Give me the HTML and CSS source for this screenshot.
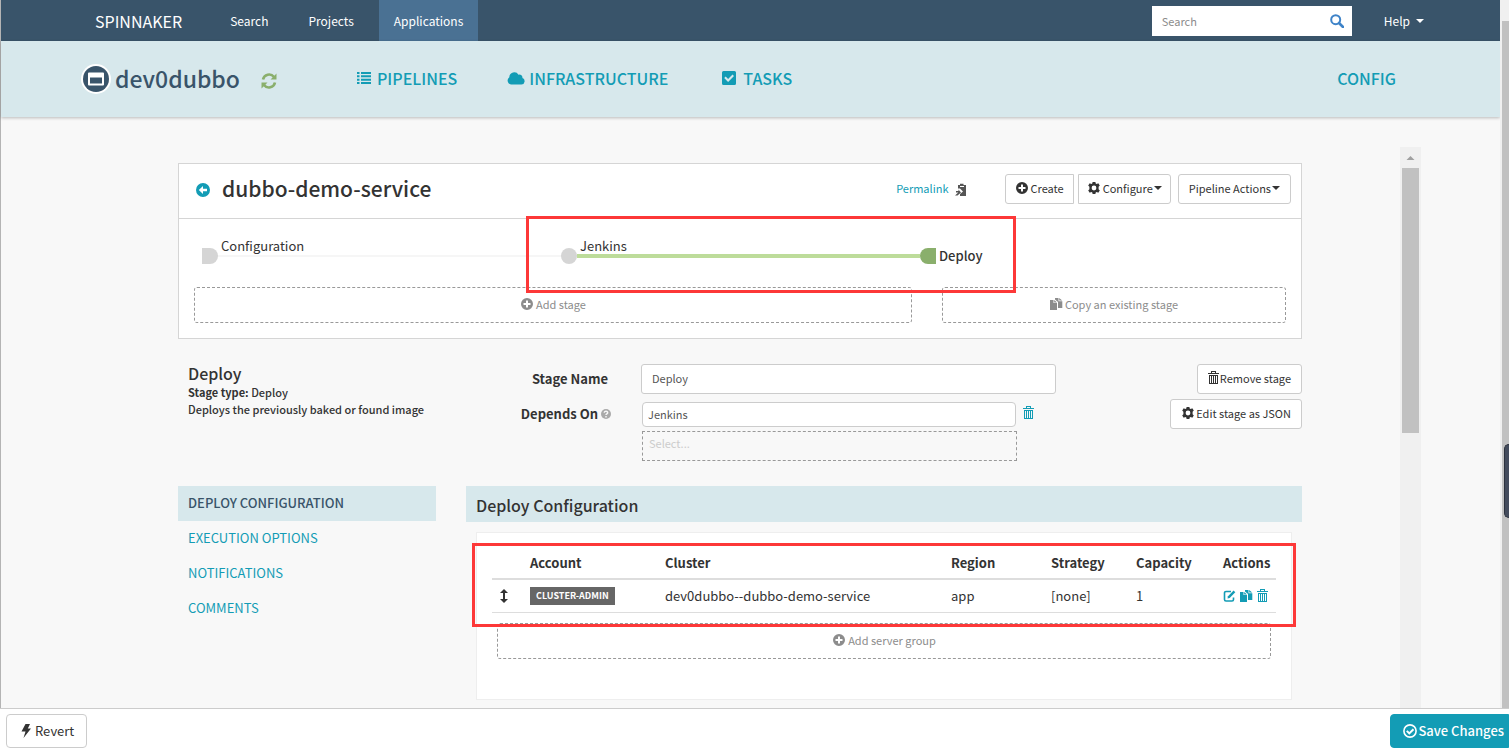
FILE: index.html
```html
<!DOCTYPE html>
<html lang="en">
<head>
<meta charset="utf-8">
<title>dev0dubbo · Pipelines</title>
<link rel="stylesheet" href="styles.css">
</head>
<body>
<svg class="sprite" aria-hidden="true">
  <symbol id="plus" viewBox="0 0 14 14"><path fill-rule="evenodd" d="M7 1a6 6 0 1 0 0 12A6 6 0 0 0 7 1zM6 3.500h2V6h2.500v2H8v2.500H6V8H3.500V6H6z"/></symbol>
  <symbol id="back" viewBox="0 0 14 14"><path fill-rule="evenodd" d="M7 0a7 7 0 1 0 0 14A7 7 0 0 0 7 0zM7 3v2.800h4v2.400H7V11L2.800 7z"/></symbol>
  <symbol id="gear" viewBox="0 0 14 14"><path fill-rule="evenodd" d="M5.600 1h2.800l.3 1.600 1 .5L11.300 2.200l1.500 2.300-1.200 1.300v2.400l1.200 1.300-1.500 2.300-1.600-.9-1 .5-.3 1.600H5.600l-.3-1.600-1-.5-1.600.9-1.500-2.300 1.200-1.300V5.800L1.200 4.500l1.500-2.300 1.600.9 1-.5zM7 4.600a2.400 2.400 0 1 0 0 4.800 2.400 2.400 0 0 0 0-4.800z"/></symbol>
  <symbol id="trash" viewBox="0 0 11 14"><path shape-rendering="crispEdges" fill-rule="evenodd" d="M3 0h5v2h3v1H0V2h3zM4 1v1h3V1zM1 4h9v9H1zM2 5v7h1V5zM4 5v7h1V5zM6 5v7h1V5zM8 5v7h1V5z"/></symbol>
  <symbol id="copy" viewBox="0 0 13 12"><path d="M0 2h3.500v3H7v7H0zM4.200 2L7 4.500H4.200zM5 0h3.500v3.200h3.800V10H8V4L5 1.400zM9.200 0l3 2.600h-3z"/></symbol>
  <symbol id="clip" viewBox="0 0 12 13"><path d="M3 2h2V.8h3.500V2H11v11H5v-2l3-2.500L5 5.500H3zM5 3v1h4V3z" fill-rule="evenodd"/><path d="M0 12.500h2.500L6 9.500 3.500 6.500V8H1v1.500h2.300z"/></symbol>
  <symbol id="edit" viewBox="0 0 13 12"><path d="M8 1.500H3A1.500 1.500 0 0 0 1.500 3v6.500A1.500 1.500 0 0 0 3 11h6a1.500 1.500 0 0 0 1.500-1.500V7.500" fill="none" stroke="currentColor" stroke-width="1.600"/><path d="M5 6.300L10.600.6l1.700 1.700L6.700 8 4.500 8.500z"/></symbol>
  <symbol id="updown" viewBox="0 0 8 14"><path d="M4 0l4 4H5v6h3l-4 4-4-4h3V4H0z"/></symbol>
  <symbol id="list" viewBox="0 0 14 12"><path d="M0 0h2.500v2H0zM4 0h10v2H4zM0 3.300h2.500v2H0zM4 3.300h10v2H4zM0 6.700h2.500v2H0zM4 6.700h10v2H4zM0 10h2.500v2H0zM4 10h10v2H4z"/></symbol>
  <symbol id="cloud" viewBox="0 0 18 13"><path d="M4 12.500A4 4 0 0 1 2.300 5.300 5 5 0 0 1 11.500 2.700a3 3 0 0 1 3.900 3.400 3.300 3.300 0 0 1-.9 6.400z"/></symbol>
  <symbol id="task" viewBox="0 0 14 14"><path fill-rule="evenodd" d="M1.500 0h11A1.500 1.500 0 0 1 14 1.500v11a1.500 1.500 0 0 1-1.500 1.500h-11A1.500 1.500 0 0 1 0 12.500v-11A1.500 1.500 0 0 1 1.500 0zM2.200 7l3.900 3.900L12 5l-1.500-1.500-4.400 4.400-2.400-2.400z"/></symbol>
  <symbol id="refresh" viewBox="0 0 16 16"><path d="M2 6.500A6.200 6.200 0 0 1 13 4M14 9.500A6.200 6.200 0 0 1 3 12" fill="none" stroke="currentColor" stroke-width="2.600"/><path d="M15.500.5v6h-6zM.5 15.500v-6h6z"/></symbol>
  <symbol id="find" viewBox="0 0 14 14"><circle cx="5.700" cy="5.700" r="4.500" fill="none" stroke="currentColor" stroke-width="2"/><path d="M9 9l4 4" stroke="currentColor" stroke-width="2.600" stroke-linecap="round"/></symbol>
  <symbol id="caret" viewBox="0 0 8 4"><path d="M0 0h8L4 4z"/></symbol>
  <symbol id="help" viewBox="0 0 10 10"><circle cx="5" cy="5" r="5"/><path d="M3.300 3.800C3.300 1.600 6.700 1.700 6.700 3.700 6.700 5 5 4.800 5 6.100M5 7v1.400" fill="none" stroke="#f8f8f8" stroke-width="1.400"/></symbol>
  <symbol id="bolt" viewBox="0 0 10 14"><path d="M4.500 0H9L6.800 4.500H10L2.500 14l2-6.500H.5z"/></symbol>
  <symbol id="check" viewBox="0 0 14 14"><circle cx="7" cy="7" r="6.100" fill="none" stroke="currentColor" stroke-width="1.600"/><path d="M3.800 6.900l2.500 2.500 4.200-4.200" fill="none" stroke="currentColor" stroke-width="2"/></symbol>
  <symbol id="app" viewBox="0 0 30 30"><circle cx="15" cy="15" r="15" fill="#fff"/><circle cx="15" cy="15" r="13" fill="#39546a"/><path d="M8 8.500h14a1 1 0 0 1 1 1v11a1 1 0 0 1-1 1H8a1 1 0 0 1-1-1v-11a1 1 0 0 1 1-1zM9 13.500v6h12v-6z" fill="#fff" fill-rule="evenodd"/></symbol>
</svg>

<div class="window">
  <div class="page">
    <nav class="topbar">
      <a class="brand" href="#">SPINNAKER</a>
      <div class="topnav">
        <a href="#">Search</a>
        <a href="#">Projects</a>
        <a class="active" href="#">Applications</a>
      </div>
      <label class="search">
        <input type="text" placeholder="Search" aria-label="Search">
        <svg class="i14"><use href="#find"/></svg>
      </label>
      <a class="helplink" href="#">Help <svg class="caret"><use href="#caret"/></svg></a>
    </nav>
    <header class="appbar">
      <svg class="appicon"><use href="#app"/></svg>
      <h1>dev0dubbo</h1>
      <button class="bare refresh" aria-label="Refresh"><svg class="i16"><use href="#refresh"/></svg></button>
      <div class="tabs">
        <a href="#"><svg class="listicon"><use href="#list"/></svg>PIPELINES</a>
        <a class="tight" href="#"><svg class="cloud"><use href="#cloud"/></svg>INFRASTRUCTURE</a>
        <a class="wide" href="#"><svg class="i14"><use href="#task"/></svg>TASKS</a>
      </div>
      <a class="config" href="#">CONFIG</a>
    </header>

    <div class="body">
      <main class="content">
        <section class="panel">
          <div class="panel-head">
            <a class="back" href="#" aria-label="Back"><svg class="i14"><use href="#back"/></svg></a>
            <h2>dubbo-demo-service</h2>
            <a class="permalink" href="#">Permalink</a>
            <button class="bare clip" aria-label="Copy link"><svg class="i12"><use href="#clip"/></svg></button>
            <div class="actions">
              <button class="btn first"><svg class="i14"><use href="#plus"/></svg>Create</button>
              <button class="btn mid"><svg class="i14"><use href="#gear"/></svg>Configure<svg class="caret"><use href="#caret"/></svg></button>
              <button class="btn last">Pipeline Actions<svg class="caret"><use href="#caret"/></svg></button>
            </div>
          </div>
          <div class="graph">
            <div class="stage start"><span class="node"></span><span class="name">Configuration</span></div>
            <div class="stage middle"><span class="node"></span><span class="name">Jenkins</span></div>
            <div class="stage end"><span class="node"></span><span class="name">Deploy</span></div>
          </div>
          <div class="adders">
            <button class="dashed"><svg class="i14"><use href="#plus"/></svg>Add stage</button>
            <button class="dashed"><svg class="copy"><use href="#copy"/></svg>Copy an existing stage</button>
          </div>
          <div class="mark mark-graph"></div>
        </section>

        <section class="details">
          <div class="intro">
            <h3>Deploy</h3>
            <p><b>Stage type:</b> Deploy</p>
            <p>Deploys the previously baked or found image</p>
          </div>
          <div class="labels">
            <label for="stage-name">Stage Name</label>
            <label class="with-help" for="depends">Depends On<svg class="help"><use href="#help"/></svg></label>
          </div>
          <div class="fields">
            <input id="stage-name" type="text" value="Deploy">
            <div class="depends">
              <input id="depends" type="text" value="Jenkins">
              <button class="bare" aria-label="Remove dependency"><svg class="trash"><use href="#trash"/></svg></button>
            </div>
            <select aria-label="Add dependency"><option>Select...</option></select>
          </div>
          <div class="buttons">
            <button class="btn"><svg class="trash"><use href="#trash"/></svg>Remove stage</button>
            <button class="btn"><svg class="i14"><use href="#gear"/></svg>Edit stage as JSON</button>
          </div>
        </section>

        <div class="config-area">
          <nav class="sections">
            <a class="active" href="#">DEPLOY CONFIGURATION</a>
            <a href="#">EXECUTION OPTIONS</a>
            <a href="#">NOTIFICATIONS</a>
            <a href="#">COMMENTS</a>
          </nav>
          <section class="deploy">
            <h4>Deploy Configuration</h4>
            <div class="card">
              <table>
                <colgroup><col class="c-move"><col class="c-account"><col><col class="c-region"><col class="c-strategy"><col class="c-capacity"><col class="c-actions"></colgroup>
                <thead><tr><th></th><th>Account</th><th>Cluster</th><th>Region</th><th>Strategy</th><th>Capacity</th><th>Actions</th></tr></thead>
                <tbody><tr>
                  <td><svg class="updown"><use href="#updown"/></svg></td>
                  <td><span class="tag">CLUSTER-ADMIN</span></td>
                  <td>dev0dubbo--dubbo-demo-service</td>
                  <td>app</td>
                  <td>[none]</td>
                  <td>1</td>
                  <td><div class="rowacts">
                    <button class="bare" aria-label="Edit"><svg class="copy"><use href="#edit"/></svg></button>
                    <button class="bare" aria-label="Copy"><svg class="copy"><use href="#copy"/></svg></button>
                    <button class="bare" aria-label="Delete"><svg class="trash"><use href="#trash"/></svg></button>
                  </div></td>
                </tr></tbody>
              </table>
              <button class="dashed"><svg class="i14"><use href="#plus"/></svg>Add server group</button>
              <div class="mark mark-table"></div>
            </div>
          </section>
        </div>
      </main>
      <div class="scroll inner"><svg class="arrow"><use href="#caret"/></svg><div class="thumb"></div></div>
    </div>
  </div>
  <div class="scroll outer"><div class="thumb"></div></div>
  <div class="handle"></div>
</div>
<footer class="footer">
  <button class="revert"><svg class="bolt"><use href="#bolt"/></svg>Revert</button>
  <button class="save"><svg class="i14"><use href="#check"/></svg>Save Changes</button>
</footer>
</body>
</html>
```
FILE: styles.css
```css
* { box-sizing: border-box; }
body {
  margin: 0;
  height: 100vh;
  display: flex;
  flex-direction: column;
  overflow: hidden;
  font: 13px/18px "Noto Sans CJK SC", "Open Sans", sans-serif;
  color: #333;
  background: #f8f8f8;
}
a { color: #139cb5; text-decoration: none; }
h1, h2, h3, h4, p { margin: 0; font-weight: 500; }
button, input, select { font: inherit; color: inherit; }
svg { fill: currentColor; flex: none; display: block; }
.sprite { position: absolute; width: 0; height: 0; }
.i12 { width: 12px; height: 13px; }
.i14 { width: 14px; height: 14px; }
.i16 { width: 16px; height: 16px; }
.caret { width: 8px; height: 4px; }
.copy { width: 13px; height: 12px; }
.trash { width: 11px; height: 14px; }
.updown { width: 8px; height: 14px; }
.bare { border: 0; padding: 0; background: none; color: #139cb5; }

.window { flex: 1; min-height: 0; display: flex; position: relative; border-left: 1px solid #b4b4b4; }
.page { flex: 1; min-width: 0; display: flex; flex-direction: column; }

.topbar { height: 41px; flex: none; display: flex; align-items: center; padding: 0 76px 0 94px; background: #39546a; font-size: 12px; }
.topbar a { color: #fff; }
.brand { font-size: 16px; }
.topnav { display: flex; gap: 10px; margin-left: 33px; }
.topnav a { padding: 1px 15px 0; line-height: 40px; }
.topnav .active { background: #4a7193; }
.search { display: flex; align-items: center; width: 200px; height: 30px; margin-left: auto; padding: 0 8px 0 10px; background: #fff; color: #3e83c8; }
.search input { flex: 1; min-width: 0; border: 0; padding: 0; outline: 0; font-size: 11px; background: none; }
.search input::placeholder { color: #8c8c8c; opacity: 1; }
.helplink { display: flex; align-items: center; gap: 6px; margin-left: 32px; }

.appbar { height: 76px; flex: none; display: flex; align-items: center; padding: 0 104px 0 80px; background: #d7e8ec; box-shadow: 0 1px 3px rgba(0, 0, 0, .25); }
.appicon { width: 30px; height: 30px; }
h1 { margin-left: 4px; padding-bottom: 2px; font-size: 23px; line-height: 30px; color: #39546a; }
.refresh { margin: 4px 0 0 21px; color: #8aaf6c; }
.tabs { display: flex; gap: 50px; margin-left: 80px; }
.tabs a, .config { display: flex; align-items: center; gap: 6px; padding-bottom: 2px; font-size: 16px; line-height: 24px; font-weight: 500; }
.tabs .tight { gap: 4px; }
.tabs .wide { gap: 7px; margin-left: 4px; }
.config { margin-left: auto; }
.listicon { width: 14px; height: 12px; }
.cloud { width: 18px; height: 13px; }

.body { flex: 1; min-height: 0; display: flex; margin: 30px 79px 0; }
.content { flex: 1; min-width: 0; padding: 16px 98px 0; overflow: hidden; }

.scroll { background: #f0f0f0; flex: none; }
.scroll .thumb { background: #c1c1c1; }
.inner { width: 21px; padding: 9px 2px 0; display: flex; flex-direction: column; align-items: center; gap: 8px; }
.inner .thumb { width: 17px; height: 48%; }
.arrow { width: 9px; height: 4px; color: #a0a0a0; transform: rotate(180deg); }
.outer { width: 9px; padding: 21px 0 0 2px; }
.outer .thumb { height: 100%; }
.handle { position: absolute; right: 0; top: 444px; width: 5px; height: 74px; border-radius: 5px 0 0 5px; background: #434b5c; border: 1px solid #2c323e; border-right: 0; }

.panel { position: relative; border: 1px solid #d5d5d5; background: #fff; }
.panel-head { display: flex; align-items: center; height: 55px; padding: 0 10px 4px 17px; border-bottom: 1px solid #d5d5d5; font-size: 11px; }
h2 { margin: 0 auto 0 12px; padding-bottom: 2px; font-size: 21px; line-height: 30px; }
.back { padding-top: 2px; }
.permalink { padding-bottom: 2px; }
.clip { margin-left: 7px; color: #555; }
.actions { display: flex; margin-left: 38px; }
.btn { display: flex; align-items: center; gap: 2px; height: 30px; padding: 0 10px 2px; border: 1px solid #ccc; border-radius: 3px; background: #fff; font-size: 11px; white-space: nowrap; }
.btn .caret { margin-left: -1px; }
.btn.first { border-radius: 3px 0 0 3px; margin-right: 4px; padding: 0 9px 2px; gap: 1px; }
.btn.mid { border-radius: 0 3px 3px 0; margin-right: 7px; padding: 0 8px 2px; }

.graph { display: grid; grid-template-columns: repeat(3, 1fr); padding: 29px 22px 23px 23px; }
.stage { position: relative; display: flex; align-items: center; height: 16px; }
.stage::after { content: ""; flex: 1; height: 2px; background: #f6f6f6; }
.middle::after { height: 4px; background: #bddc9a; }
.end::after { content: none; }
.node { width: 16px; height: 16px; border-radius: 8px; background: #d5d5d5; }
.start .node { border-radius: 0 8px 8px 0; }
.end .node { border-radius: 8px 0 0 8px; background: #8aaf6c; }
.name { position: absolute; left: 19px; bottom: 9px; }
.end .name { position: static; margin-left: 3px; font-weight: 500; }

.dashed { display: flex; align-items: center; justify-content: center; gap: 2px; height: 36px; padding: 0 6px 2px; border: 1px dashed #999; border-radius: 3px; background: none; color: #8c8c8c; font-size: 11px; }
.adders { display: grid; grid-template-columns: 718fr 344fr; gap: 30px; padding: 0 15px 15px; }
.mark { position: absolute; border: 3px solid #fd3838; pointer-events: none; }
.mark-graph { right: 285px; width: 490px; top: 52px; height: 77px; }

.details { display: grid; grid-template-columns: 248fr 149fr 415fr 213fr; gap: 33px; margin-top: 24px; height: 123px; }
.intro { padding-left: 10px; font-size: 11px; line-height: 17px; white-space: nowrap; }
h3 { font-size: 16px; line-height: 21px; }
.labels, .fields, .buttons { padding-top: 1px; }
.labels { display: flex; flex-direction: column; gap: 5px; font-weight: 700; }
.labels label { display: flex; align-items: center; justify-content: flex-end; height: 30px; }
.labels .with-help { gap: 3px; margin-right: -3px; }
.help { width: 10px; height: 10px; color: #aaa; }
.fields { display: flex; flex-direction: column; font-size: 11px; }
.fields input, .fields select { border: 1px solid #ccc; border-radius: 3px; background: #fff; min-width: 0; outline: 0; color: #555; }
#stage-name { height: 30px; padding: 0 10px 2px; }
.depends { display: flex; align-items: flex-start; gap: 7px; margin: 8px 0 4px; padding: 0 22px 0 1px; }
#depends { flex: 1; height: 25px; padding: 0 5px 2px; border-radius: 4px; }
.depends .bare { padding-top: 4px; }
.fields select { appearance: none; height: 30px; margin: 0 39px 0 1px; padding: 0 6px 6px; border: 1px dashed #999; border-radius: 0; background: none; color: #ccc; }
.buttons { display: flex; flex-direction: column; align-items: flex-end; gap: 5px; }
.buttons .btn { gap: 1px; }

.config-area { display: grid; grid-template-columns: 258fr 836fr; gap: 30px; }
.sections { display: flex; flex-direction: column; }
.sections a { height: 35px; padding: 0 10px; line-height: 33px; }
.sections .active { background: #d7e8ec; color: #39546a; font-weight: 500; }
h4 { height: 36px; padding: 0 10px; background: #d7e8ec; font-size: 16px; line-height: 39px; }
.card { position: relative; margin: 10px; height: 168px; padding: 14px 15px 0; border: 1px solid #eee; background: #fff; }
table { width: 100%; table-layout: fixed; border-collapse: collapse; }
th, td { text-align: left; padding: 0 0 0 8px; white-space: nowrap; }
th { height: 32px; border-bottom: 2px solid #ddd; font-weight: 700; }
td { height: 33px; border-bottom: 1px solid #ddd; }
.c-move { width: 30px; }
.c-account { width: 135px; }
.c-region { width: 100px; }
.c-strategy { width: 85px; }
.c-capacity { width: 87px; }
.c-actions { width: 61px; }
.tag { display: inline-block; padding: 0 6px; background: #666; color: #fff; font-size: 9px; font-weight: 700; line-height: 18px; vertical-align: middle; }
.rowacts { display: flex; align-items: center; gap: 4px; }
.card .dashed { width: calc(100% - 10px); margin: 10px 5px 0; }
.mark-table { left: -5px; right: -5px; top: 10px; height: 84px; }

.footer { flex: none; display: flex; justify-content: space-between; height: 41px; padding: 5px 0 0 6px; border-top: 1px solid #ccc; background: #fff; }
.footer button { display: flex; align-items: center; height: 34px; border: 1px solid #ccc; background: #fff; }
.footer .revert { gap: 4px; padding: 0 12px 0 14px; border-radius: 4px; }
.bolt { width: 10px; height: 14px; }
.footer .save { gap: 1px; padding: 0 4px 0 12px; border-color: #139cb5; border-radius: 4px 0 0 4px; background: #139cb5; color: #fff; font-weight: 500; }
```
